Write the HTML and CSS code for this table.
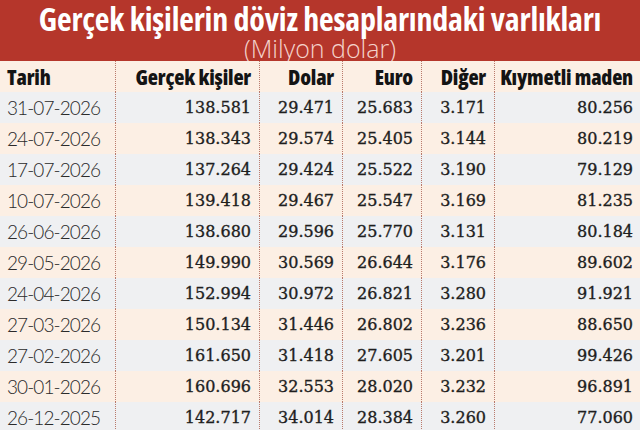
FILE: index.html
```html
<!DOCTYPE html>
<html lang="tr">
<head>
<meta charset="utf-8">
<title>Gerçek kişilerin döviz hesaplarındaki varlıkları</title>
<link rel="stylesheet" href="styles.css">
</head>
<body>
<div class="page">
  <header class="banner">
    <h1 class="title">Gerçek kişilerin döviz hesaplarındaki varlıkları</h1>
    <div class="subtitle">(Milyon dolar)</div>
  </header>
  <div class="table">
    <div class="row head">
      <div class="cell date">Tarih</div>
      <div class="cell">Gerçek kişiler</div>
      <div class="cell">Dolar</div>
      <div class="cell">Euro</div>
      <div class="cell">Diğer</div>
      <div class="cell">Kıymetli maden</div>
    </div>
    <div class="row odd"><div class="cell date">31-07-2026</div><div class="cell num">138.581</div><div class="cell num">29.471</div><div class="cell num">25.683</div><div class="cell num">3.171</div><div class="cell num">80.256</div></div>
    <div class="row even"><div class="cell date">24-07-2026</div><div class="cell num">138.343</div><div class="cell num">29.574</div><div class="cell num">25.405</div><div class="cell num">3.144</div><div class="cell num">80.219</div></div>
    <div class="row odd"><div class="cell date">17-07-2026</div><div class="cell num">137.264</div><div class="cell num">29.424</div><div class="cell num">25.522</div><div class="cell num">3.190</div><div class="cell num">79.129</div></div>
    <div class="row even"><div class="cell date">10-07-2026</div><div class="cell num">139.418</div><div class="cell num">29.467</div><div class="cell num">25.547</div><div class="cell num">3.169</div><div class="cell num">81.235</div></div>
    <div class="row odd"><div class="cell date">26-06-2026</div><div class="cell num">138.680</div><div class="cell num">29.596</div><div class="cell num">25.770</div><div class="cell num">3.131</div><div class="cell num">80.184</div></div>
    <div class="row even"><div class="cell date">29-05-2026</div><div class="cell num">149.990</div><div class="cell num">30.569</div><div class="cell num">26.644</div><div class="cell num">3.176</div><div class="cell num">89.602</div></div>
    <div class="row odd"><div class="cell date">24-04-2026</div><div class="cell num">152.994</div><div class="cell num">30.972</div><div class="cell num">26.821</div><div class="cell num">3.280</div><div class="cell num">91.921</div></div>
    <div class="row even"><div class="cell date">27-03-2026</div><div class="cell num">150.134</div><div class="cell num">31.446</div><div class="cell num">26.802</div><div class="cell num">3.236</div><div class="cell num">88.650</div></div>
    <div class="row odd"><div class="cell date">27-02-2026</div><div class="cell num">161.650</div><div class="cell num">31.418</div><div class="cell num">27.605</div><div class="cell num">3.201</div><div class="cell num">99.426</div></div>
    <div class="row even"><div class="cell date">30-01-2026</div><div class="cell num">160.696</div><div class="cell num">32.553</div><div class="cell num">28.020</div><div class="cell num">3.232</div><div class="cell num">96.891</div></div>
    <div class="row odd"><div class="cell date">26-12-2025</div><div class="cell num">142.717</div><div class="cell num">34.014</div><div class="cell num">28.384</div><div class="cell num">3.260</div><div class="cell num">77.060</div></div>
  </div>
</div>
</body>
</html>
```
FILE: styles.css
```css
html, body {
  margin: 0;
  padding: 0;
  background: #fdf1e7;
}
.page {
  width: 640px;
  height: 430px;
  overflow: hidden;
}
.banner {
  background: #b5362b;
  height: 61px;
  display: flex;
  flex-direction: column;
  align-items: center;
}
.title {
  margin: 0;
  padding-top: 2px;
  font-family: "Open Sans", "DejaVu Sans", sans-serif;
  font-weight: 700;
  font-stretch: 75%;
  font-size: 32px;
  line-height: 34px;
  color: #ffffff;
  letter-spacing: -0.2px;
}
.subtitle {
  font-family: "Open Sans", sans-serif;
  font-weight: 300;
  font-size: 25px;
  line-height: 24px;
  color: #f4d3cb;
}
.table {
  display: flex;
  flex-direction: column;
}
.row {
  display: grid;
  grid-template-columns: 116px 144px 83px 79px 73px 145px;
  height: 31px;
}
.row.head { background: #fcefe4; }
.row.odd { background: #eff0f2; }
.row.even { background: #fcefe4; }
.cell {
  display: flex;
  align-items: center;
  justify-content: flex-end;
  padding-right: 8px;
  border-right: 1px dotted #b97a6c;
  white-space: nowrap;
}
.cell:last-child { border-right: none; padding-right: 7px; }
.head .cell {
  font-family: "Open Sans", sans-serif;
  font-weight: 800;
  font-stretch: 75%;
  font-size: 21px;
  color: #141414;
  letter-spacing: -0.2px;
}
.cell.date {
  justify-content: flex-start;
  padding-left: 7px;
  padding-right: 0;
}
.row .cell.date {
  font-family: "Lato", sans-serif;
  font-weight: 300;
  font-size: 19px;
  letter-spacing: -0.9px;
  color: #2a2a2a;
}
.head .cell.date {
  font-family: "Open Sans", sans-serif;
  font-weight: 800;
  font-stretch: 75%;
  font-size: 21px;
  letter-spacing: -0.2px;
  color: #141414;
}
.num {
  font-family: "DejaVu Serif", serif;
  font-size: 16px;
  color: #1e1e1e;
  -webkit-text-stroke: 0.35px #1e1e1e;
}
```
